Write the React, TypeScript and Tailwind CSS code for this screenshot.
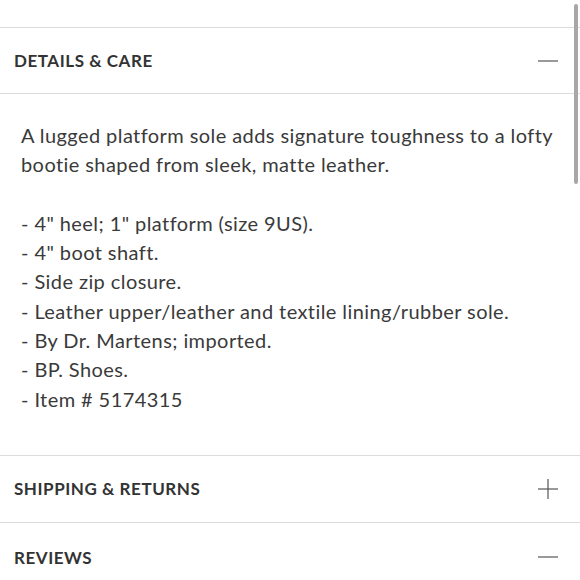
import React from 'react';

const Minus = () => (
  <svg width="22" height="22" viewBox="0 0 22 22" className="text-[#555]">
    <line x1="1" y1="11" x2="21" y2="11" stroke="currentColor" strokeWidth="1.2" />
  </svg>
);

const Plus = () => (
  <svg width="22" height="22" viewBox="0 0 22 22" className="text-[#555]">
    <line x1="1" y1="11" x2="21" y2="11" stroke="currentColor" strokeWidth="1.2" />
    <line x1="11" y1="1" x2="11" y2="21" stroke="currentColor" strokeWidth="1.2" />
  </svg>
);

const bullets = [
  '- 4" heel; 1" platform (size 9US).',
  '- 4" boot shaft.',
  '- Side zip closure.',
  '- Leather upper/leather and textile lining/rubber sole.',
  '- By Dr. Martens; imported.',
  '- BP. Shoes.',
  '- Item # 5174315',
];

const Header: React.FC<{ title: string; open: boolean; height: string }> = ({ title, open, height }) => (
  <div className={`flex items-center justify-between pl-[14px] pr-[21px] ${height} border-b border-[#dcdcdc]`}>
    <h3 className="text-[17px] font-bold tracking-[0.55px] text-[#333]">{title}</h3>
    {open ? <Minus /> : <Plus />}
  </div>
);

export default function App() {
  return (
    <div
      className="relative w-[580px] h-[580px] overflow-hidden bg-white text-[#333]"
      style={{ fontFamily: 'Lato, "Noto Sans", sans-serif' }}
    >
      <div className="pt-[27px]">
        <div className="border-t border-[#dcdcdc]">
          <Header title="DETAILS & CARE" open height="h-[66px]" />
          <div className="pl-[21px] pr-[20px] pt-[27px] pb-[41px] border-b border-[#dcdcdc] text-[20px] tracking-[0.42px] leading-[29.3px] text-[#3a3a3a]">
            <p>A lugged platform sole adds signature toughness to a lofty bootie shaped from sleek, matte leather.</p>
            <p className="mt-[29.3px]">
              {bullets.map(b => (
                <span key={b} className="block">{b}</span>
              ))}
            </p>
          </div>
          <Header title="SHIPPING & RETURNS" open={false} height="h-[67px]" />
          <Header title="REVIEWS" open height="h-[70px]" />
        </div>
      </div>
      {/* scrollbar */}
      <div className="absolute right-[2px] top-[4px] w-[4px] h-[180px] rounded-full bg-[#a8a8a8]" />
    </div>
  );
}
